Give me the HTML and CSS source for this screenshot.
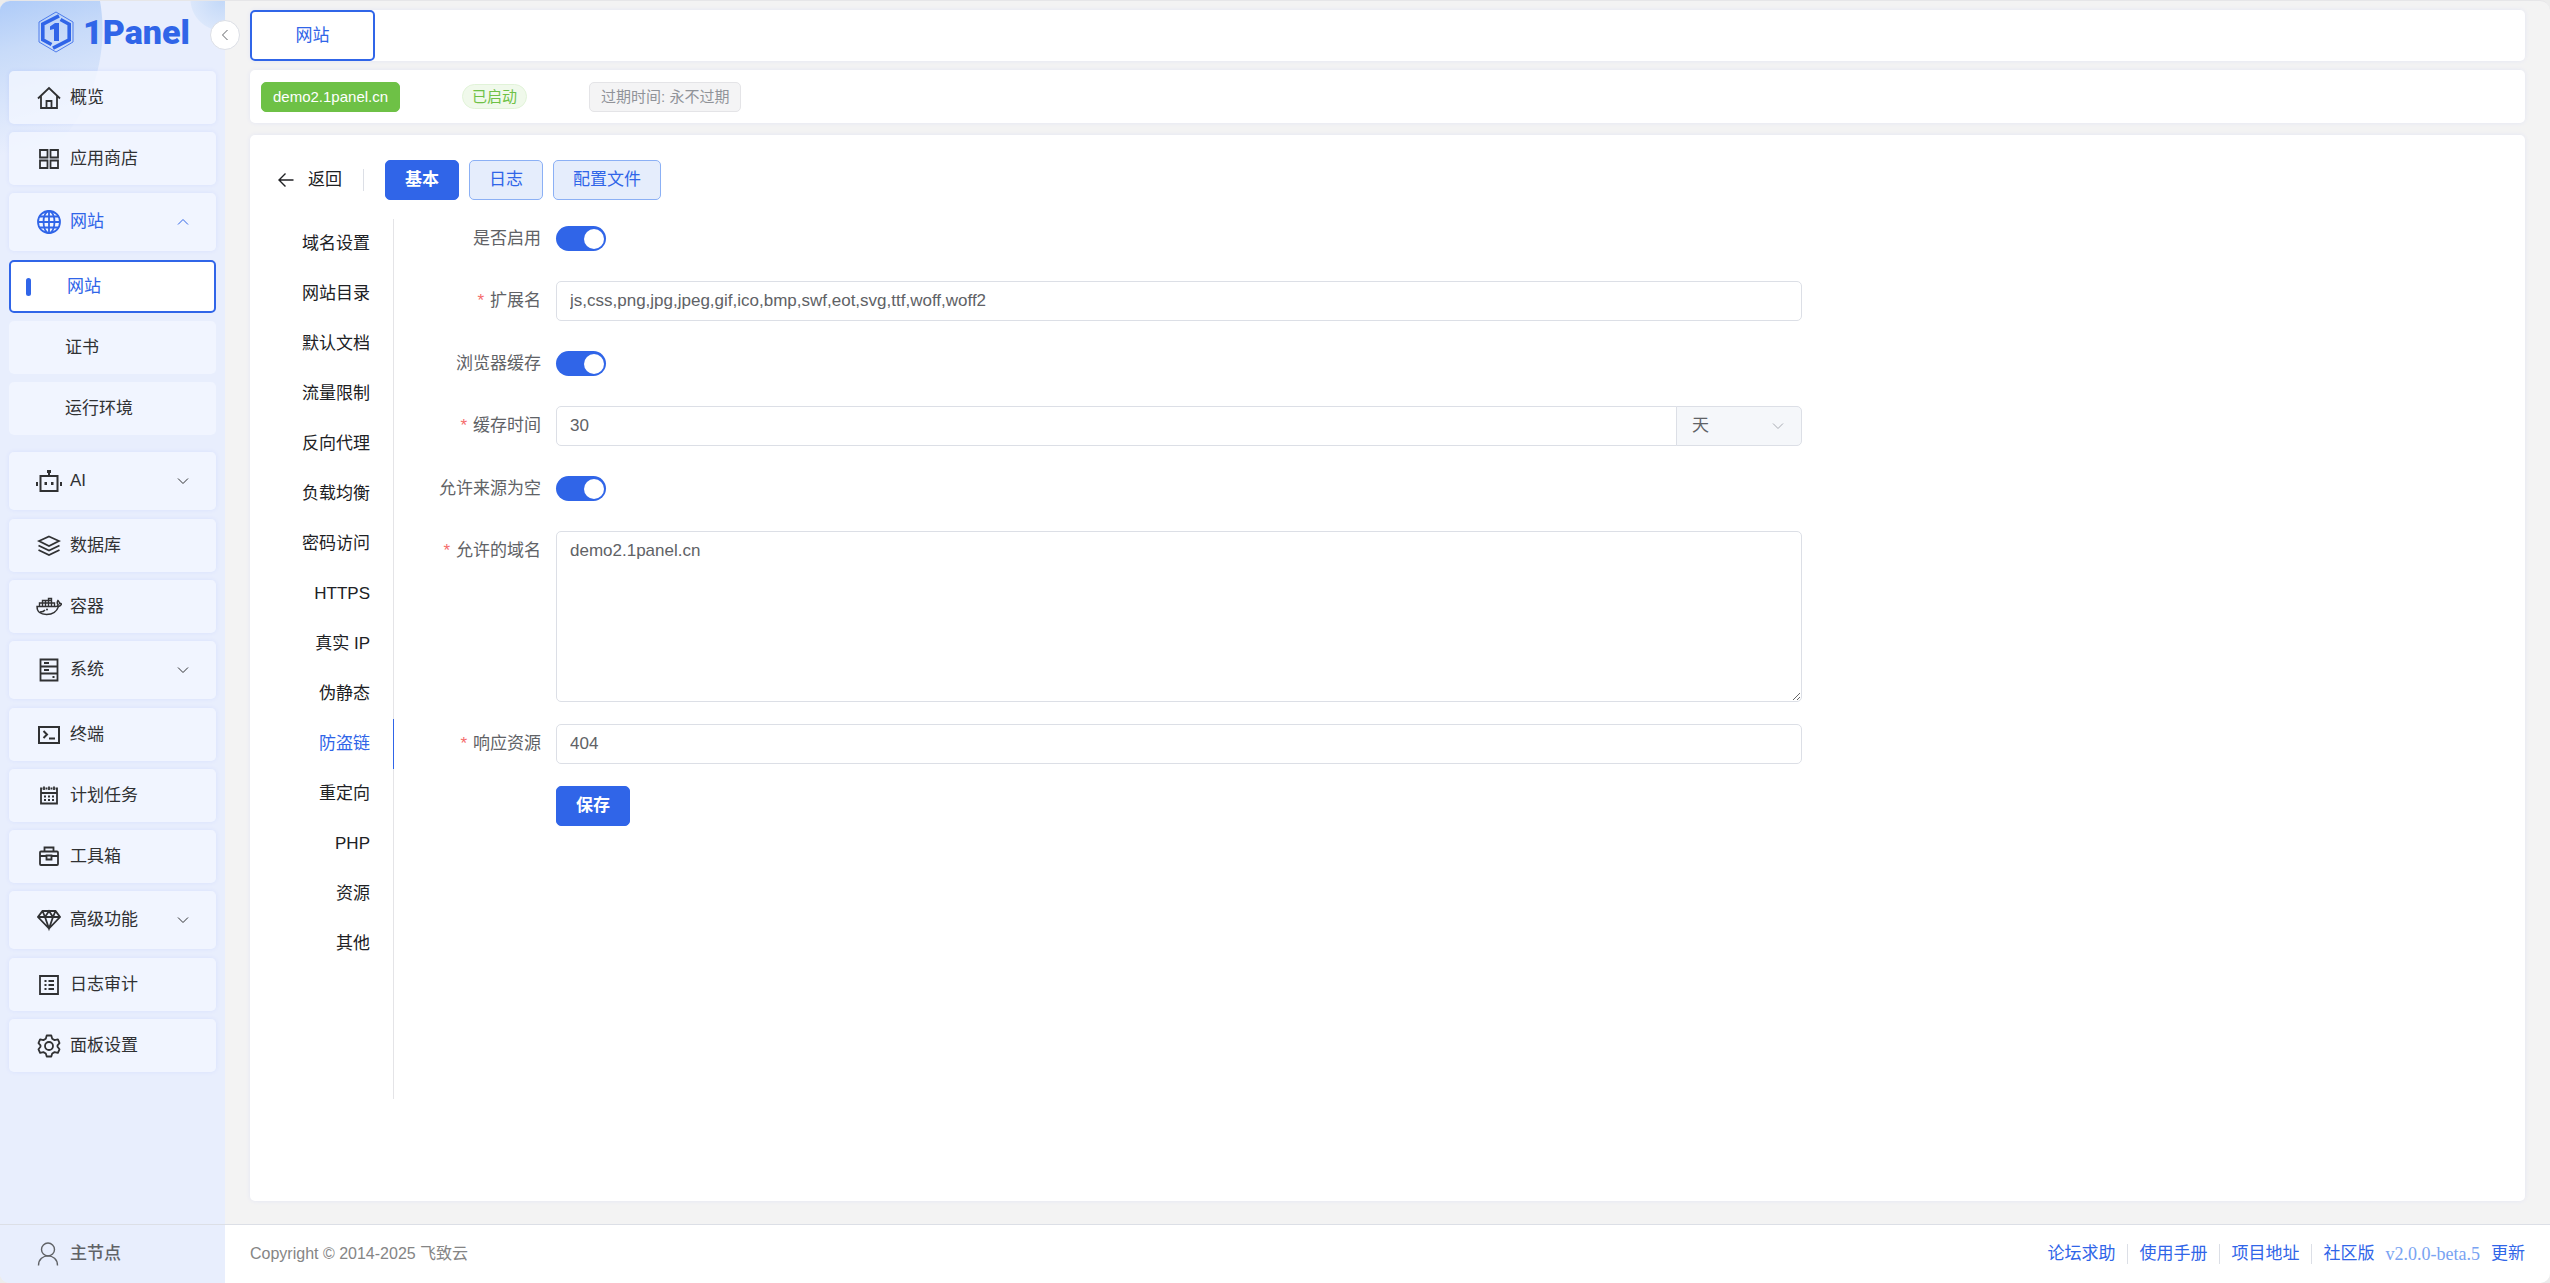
FILE: index.html
```html
<!DOCTYPE html>
<html lang="zh-CN">
<head>
<meta charset="UTF-8">
<meta name="viewport" content="width=device-width, initial-scale=1">
<title>1Panel</title>
<link rel="stylesheet" href="styles.css">
</head>
<body>
<svg class="sprite" aria-hidden="true">
  <symbol id="chevron" viewBox="0 0 12 12"><path d="M1 3.5l5 5 5-5"/></symbol>
</svg>
<div class="app">
  <aside class="sidebar">
    <a class="logo" href="#" aria-label="1Panel">
      <svg class="logo-mark" viewBox="0 0 36 42">
        <path d="M18 1L35 11V31L18 41L1 31V11Z" stroke="currentColor" stroke-width="0.8"/>
        <path d="M21 4.800L4.800 13.200V28.800L13.500 33.500" stroke="currentColor" stroke-width="3.6"/>
        <path d="M15 37.200L31.200 28.800V13.200L22.500 8.500" stroke="currentColor" stroke-width="3.6"/>
        <path d="M12 15.500L17 12H21V30H16V18L12 19Z" fill="currentColor"/>
      </svg>
      <span class="logo-text">1Panel</span>
    </a>
    <nav class="menu">
      <a class="item" href="#"><svg class="icon" viewBox="0 0 24 24"><path d="M1 12.500L12 2L23 12.500M4 10V22H20V10M9.500 22V15H14.500V22"/></svg>概览</a>
      <a class="item" href="#"><svg class="icon" viewBox="0 0 24 24"><path d="M3 3H10.500V10.500H3ZM13.500 3H21V10.500H13.500ZM3 13.500H10.500V21H3ZM13.500 13.500H21V21H13.500Z"/></svg>应用商店</a>
      <div class="group">
        <a class="item item-group current" href="#"><svg class="icon" viewBox="0 0 24 24"><circle cx="12" cy="12" r="11"/><ellipse cx="12" cy="12" rx="5.500" ry="11"/><path d="M12 1V23M1 12H23M2.500 6.500H21.500M2.500 17.500H21.500"/></svg>网站<svg class="chev up"><use href="#chevron"/></svg></a>
        <a class="item sub active" href="#">网站</a>
        <a class="item sub" href="#">证书</a>
        <a class="item sub" href="#">运行环境</a>
      </div>
      <a class="item item-group" href="#"><svg class="icon wide" viewBox="0 0 26 24"><path d="M4.500 7H21.500V22H4.500ZM13 7V3M1 13V17M25 13V17" stroke-width="2"/><path class="solid" d="M11 1H15V4H11ZM8.500 13H11V16H8.500ZM15 13H17.500V16H15Z"/></svg>AI<svg class="chev"><use href="#chevron"/></svg></a>
      <a class="item" href="#"><svg class="icon" viewBox="0 0 24 24"><path d="M12 2.500L22 7L12 12L2 7ZM1.500 11.500L12 16.500L22.500 11.500M1.500 16L12 21L22.500 16"/></svg>数据库</a>
      <a class="item" href="#"><svg class="icon wide" viewBox="0 0 26 24"><path d="M1 11.500H20C21.500 11.500 22 11 22 9.500C21 8.500 21 7 22 5.500C23 6.500 23.500 7.500 23.500 8.500C24.500 8 25 8.500 25.500 9C25 10.500 24 11 22.500 11.500C21 16 17.500 19.500 10.500 19.500C4.500 19.500 1 17 1 11.500ZM3.500 11V8H6.500V11M6.500 8V5.500H12.500V11M9.500 5.500V11M12.500 11V3.500H15.500V11M12.500 5.500H15.500M6.500 8H18.500V11M4 17C6.500 17 8 16.500 9 15" stroke-width="1.400"/><circle class="solid" cx="11" cy="14.500" r="1"/></svg>容器</a>
      <a class="item item-group" href="#"><svg class="icon" viewBox="0 0 24 24"><path d="M3.500 1.500H20.500V22.500H3.500ZM3.500 8.500H20.500M3.500 15.500H20.500M7 5H12M7 12H12M15.500 19H17.500"/></svg>系统<svg class="chev"><use href="#chevron"/></svg></a>
      <a class="item" href="#"><svg class="icon" viewBox="0 0 24 24"><path d="M2 4H22V20H2ZM6.500 8L10 11.500L6.500 15M12 15.500H18" stroke-width="2"/></svg>终端</a>
      <a class="item" href="#"><svg class="icon" viewBox="0 0 24 24"><path d="M5.500 4.500H4V19.500H20V4.500H18.500M8.500 4.500H10.500M13.500 4.500H15.500M7 2.500V6M12 2.500V6M17 2.500V6M4 9H20"/><path d="M7 12.500H9M11 12.500H13M15 12.500H17M7 16H9M11 16H13M15 16H17"/></svg>计划任务</a>
      <a class="item" href="#"><svg class="icon" viewBox="0 0 24 24"><path d="M7.500 6.500V2.500H16.500V6.500M5.500 6.500H4Q3 6.500 3 7.500V19Q3 20 4 20H20Q21 20 21 19V7.500Q21 6.500 20 6.500H5.500M3 11H9.500M14.500 11H21M9.500 10.500H14.500V14.500H9.500Z"/></svg>工具箱</a>
      <a class="item item-group" href="#"><svg class="icon" viewBox="0 0 24 24"><path d="M5.500 3H18.500L23 9L12 20.500L1 9ZM1 9H23M5.500 3L8 9L12 20.500L16 9L18.500 3M8 9L12 3L16 9"/></svg>高级功能<svg class="chev"><use href="#chevron"/></svg></a>
      <a class="item" href="#"><svg class="icon" viewBox="0 0 24 24"><path d="M3 3H21V21H3Z"/><path d="M7.500 8H9.500M11.500 8H17M7.500 12H9.500M11.500 12H17M7.500 16H9.500M11.500 16H17"/></svg>日志审计</a>
      <a class="item" href="#"><svg class="icon" viewBox="0 0 24 24"><path d="M9.700 1.500H14.300L15.200 4.700L17.600 6.100L20.900 5.300L22.500 9.200L20.500 11.400V12.800L22.500 15.300L20.900 18.900L17.600 18.100L15.200 19.500L14.300 22.500H9.700L8.800 19.500L6.400 18.100L3.100 18.900L1.500 15.300L3.500 12.800V11.400L1.500 9.200L3.100 5.300L6.400 6.100L8.800 4.700Z" stroke-linejoin="round"/><circle cx="12" cy="12" r="4"/></svg>面板设置</a>
    </nav>
    <button class="node" type="button"><svg class="node-icon" viewBox="0 0 24 24"><circle cx="12" cy="7.500" r="6.500"/><path d="M2.500 23.500C2.500 10.700 21.500 10.700 21.500 23.500"/></svg>主节点</button>
    <button class="collapse" type="button" aria-label="收起"><svg class="chev left"><use href="#chevron"/></svg></button>
  </aside>

  <div class="page">
    <main class="content">
      <div class="card tabbar"><button class="tab" type="button">网站</button></div>

      <div class="card status">
        <span class="tag tag-site">demo2.1panel.cn</span>
        <span class="tag tag-run">已启动</span>
        <span class="tag tag-expire">过期时间: 永不过期</span>
      </div>

      <section class="card detail">
        <header class="detail-head">
          <a class="back" href="#"><svg class="arrow" viewBox="0 0 16 16"><path d="M15.500 8H1M7.500 1.500L1 8L7.500 14.500"/></svg>返回</a>
          <button class="btn btn-primary" type="button">基本</button>
          <button class="btn btn-plain" type="button">日志</button>
          <button class="btn btn-plain" type="button">配置文件</button>
        </header>

        <div class="detail-body">
          <nav class="side-tabs">
            <a href="#">域名设置</a>
            <a href="#">网站目录</a>
            <a href="#">默认文档</a>
            <a href="#">流量限制</a>
            <a href="#">反向代理</a>
            <a href="#">负载均衡</a>
            <a href="#">密码访问</a>
            <a href="#">HTTPS</a>
            <a href="#">真实 IP</a>
            <a href="#">伪静态</a>
            <a href="#" class="selected">防盗链</a>
            <a href="#">重定向</a>
            <a href="#">PHP</a>
            <a href="#">资源</a>
            <a href="#">其他</a>
          </nav>

          <div class="form-area">
            <form class="form">
              <div class="row row-switch">
                <label for="enable">是否启用</label>
                <input class="switch" id="enable" type="checkbox" role="switch" checked>
              </div>
              <div class="row">
                <label class="required" for="extends">扩展名</label>
                <input class="field" id="extends" type="text" value="js,css,png,jpg,jpeg,gif,ico,bmp,swf,eot,svg,ttf,woff,woff2">
              </div>
              <div class="row row-switch">
                <label for="cache">浏览器缓存</label>
                <input class="switch" id="cache" type="checkbox" role="switch" checked>
              </div>
              <div class="row">
                <label class="required" for="cache-time">缓存时间</label>
                <div class="combo">
                  <input class="field" id="cache-time" type="text" value="30">
                  <div class="unit">
                    <select aria-label="时间单位"><option>天</option></select>
                    <svg class="chev"><use href="#chevron"/></svg>
                  </div>
                </div>
              </div>
              <div class="row row-switch">
                <label for="none-ref">允许来源为空</label>
                <input class="switch" id="none-ref" type="checkbox" role="switch" checked>
              </div>
              <div class="row">
                <label class="required" for="domains">允许的域名</label>
                <textarea class="field area" id="domains">demo2.1panel.cn</textarea>
              </div>
              <div class="row">
                <label class="required" for="response">响应资源</label>
                <input class="field" id="response" type="text" value="404">
              </div>
              <div class="row">
                <span></span>
                <button class="btn btn-primary save" type="button">保存</button>
              </div>
            </form>
          </div>
        </div>
      </section>
    </main>

    <footer class="footer">
      <span class="copyright">Copyright © 2014-2025 飞致云</span>
      <nav class="links">
        <a href="#">论坛求助</a>
        <a href="#">使用手册</a>
        <a href="#">项目地址</a>
        <a href="#">社区版</a>
        <span class="version">v2.0.0-beta.5</span>
        <a href="#" class="update">更新</a>
      </nav>
    </footer>
  </div>
</div>
</body>
</html>
```

FILE: styles.css
```css
:root {
  --primary: #3065e8;
  --text: #303133;
  --label: #606266;
  --line: #dcdfe6;
  --shadow: 0 0 5px rgba(0, 62, 255, 0.07);
}

* {
  box-sizing: border-box;
}

body {
  margin: 0;
  background: #ececec;
  color: var(--text);
  font: 17px/24px "Liberation Sans", "Noto Sans CJK SC", sans-serif;
}

button,
input,
select,
textarea {
  font: inherit;
  color: inherit;
  margin: 0;
}

button {
  cursor: pointer;
}

a {
  color: inherit;
  text-decoration: none;
}

svg {
  display: block;
  fill: none;
  stroke: currentColor;
}

.sprite {
  display: none;
}

.app {
  display: flex;
  min-height: 100vh;
  border-top: 1px solid #e6e6e8;
  border-radius: 10px;
  overflow: hidden;
  background: #f3f3f3;
}

/* Sidebar */
.sidebar {
  position: relative;
  flex: none;
  display: flex;
  flex-direction: column;
  width: 225px;
  background:
    radial-gradient(circle at 222px -2px, #c2d8f8 0, #dbe7fb 31px, transparent 32px),
    radial-gradient(circle at -66px 29px, transparent 0, transparent 168px, #e8eefd 169px),
    linear-gradient(165deg, #aecbf8 0, #c8dbf9 50px, #e8eefd 150px);
  background-color: #e8eefd;
}

.logo {
  display: flex;
  align-items: center;
  gap: 9px;
  height: 70px;
  padding: 0 0 8px 38px;
  color: var(--primary);
}

.logo-mark {
  width: 36px;
  height: 42px;
  stroke: none;
}

.logo-text {
  font: 900 34px/40px Roboto, sans-serif;
}

.menu {
  flex: 1;
  display: flex;
  flex-direction: column;
  gap: 8px;
  padding: 0 9px;
}

.group {
  display: flex;
  flex-direction: column;
  gap: 8px;
  margin-bottom: 9px;
}

.item {
  position: relative;
  display: flex;
  align-items: center;
  gap: 9px;
  height: 53px;
  padding: 0 27px 0 28px;
  border-radius: 5px;
  background: rgba(243, 246, 255, 0.8);
  box-shadow: var(--shadow);
}

.item-group {
  height: 58px;
  margin-bottom: 1px;
}

.current {
  color: var(--primary);
}

.sub {
  padding-left: 56px;
  box-shadow: none;
}

.active {
  border: 2px solid var(--primary);
  background: #fff;
  color: var(--primary);
}

.active::before {
  content: "";
  position: absolute;
  left: 15px;
  width: 5px;
  height: 18px;
  border-radius: 3px;
  background: var(--primary);
}

.icon {
  width: 24px;
  height: 24px;
  stroke-width: 1.8;
}

.wide {
  width: 26px;
  margin: 0 -1px;
}

.solid {
  fill: currentColor;
  stroke: none;
}

.chev {
  width: 12px;
  height: 12px;
  margin-left: auto;
  stroke-width: 1;
}

.up {
  transform: rotate(180deg);
}

.left {
  margin: auto;
  transform: rotate(90deg);
}

.node {
  display: flex;
  align-items: center;
  gap: 10px;
  height: 59px;
  padding: 0 0 0 36px;
  border: 0;
  border-top: 1px solid var(--line);
  background: none;
  color: var(--label);
  font-weight: 500;
}

.node-icon {
  width: 24px;
  height: 24px;
  stroke-width: 1.4;
}

.collapse {
  position: absolute;
  top: 19px;
  right: -15px;
  width: 30px;
  height: 30px;
  padding: 0;
  border: 1px solid var(--line);
  border-radius: 50%;
  background: #fff;
  color: var(--label);
}

/* Page */
.page {
  flex: 1;
  min-width: 0;
  display: flex;
  flex-direction: column;
}

.content {
  flex: 1;
  display: flex;
  flex-direction: column;
  padding: 9px 25px 23px;
}

.card {
  border-radius: 5px;
  background: #fff;
  box-shadow: var(--shadow);
}

.tabbar {
  margin-bottom: 9px;
}

.tab {
  display: block;
  width: 125px;
  height: 51px;
  border: 2px solid var(--primary);
  border-radius: 5px;
  background: #fff;
  color: var(--primary);
}

.status {
  display: flex;
  align-items: center;
  gap: 62px;
  height: 53px;
  margin-bottom: 12px;
  padding: 0 11px;
}

.tag {
  height: 30px;
  padding: 0 11px;
  border: 1px solid;
  border-radius: 5px;
  font-size: 15px;
  line-height: 28px;
}

.tag-site {
  border-color: #6ec146;
  background: #6ec146;
  color: #fff;
}

.tag-run {
  height: 25px;
  padding: 0 9px;
  border-color: #e1f3d8;
  border-radius: 13px;
  background: #f0f9eb;
  color: #6ec146;
  line-height: 23px;
}

.tag-expire {
  border-color: #e4e4e7;
  background: #f4f4f5;
  color: #909399;
}

.detail {
  flex: 1;
  padding: 25px 25px 101px;
}

.detail-head {
  display: flex;
  gap: 10px;
  margin-bottom: 18px;
}

.back {
  display: flex;
  align-items: center;
  gap: 14px;
  padding-left: 3px;
  margin-right: 11px;
  color: #202124;
}

.back::after {
  content: "";
  width: 1px;
  height: 22px;
  margin-left: 7px;
  background: var(--line);
}

.arrow {
  width: 16px;
  height: 16px;
  stroke-width: 1.4;
}

.btn {
  height: 40px;
  padding: 0 19px;
  border: 1px solid;
  border-radius: 5px;
}

.btn-primary {
  border-color: var(--primary);
  background: var(--primary);
  color: #fff;
  font-weight: 700;
}

.btn-plain {
  border-color: #8bb0f5;
  background: #e5edfc;
  color: var(--primary);
}

.detail-body {
  display: flex;
}

.side-tabs {
  flex: none;
  display: flex;
  flex-direction: column;
  width: 119px;
  min-height: 880px;
  margin-top: 1px;
  border-right: 1px solid #e4e4e7;
  color: #202124;
  text-align: right;
}

.side-tabs a {
  height: 50px;
  margin-right: -1px;
  padding-right: 23px;
  border-right: 1px solid transparent;
  line-height: 50px;
}

.side-tabs .selected {
  border-color: var(--primary);
  color: var(--primary);
}

.form-area {
  flex: 1;
  display: grid;
  grid-template-columns: 2fr 1fr;
  gap: 6px;
  padding-left: 24px;
}

.form {
  display: flex;
  flex-direction: column;
  gap: 22px;
  color: var(--label);
}

.row {
  display: grid;
  grid-template-columns: 123px 1fr;
  gap: 15px;
}

.row label {
  line-height: 40px;
  text-align: right;
}

.required::before {
  content: "*";
  margin-right: 6px;
  color: #f56c6c;
}

.row-switch {
  align-items: center;
  height: 41px;
}

.switch {
  appearance: none;
  display: flex;
  align-items: center;
  width: 50px;
  height: 25px;
  padding: 0 2px;
  border-radius: 13px;
  background: #dcdfe6;
  cursor: pointer;
}

.switch::before {
  content: "";
  width: 20px;
  height: 20px;
  border-radius: 50%;
  background: #fff;
}

.switch:checked {
  justify-content: flex-end;
  background: var(--primary);
}

.field {
  width: 100%;
  min-width: 0;
  height: 40px;
  padding: 0 13px;
  border: 1px solid var(--line);
  border-radius: 5px;
  background: #fff;
}

.area {
  display: block;
  height: 171px;
  padding: 7px 13px;
  resize: vertical;
}

.combo {
  display: flex;
}

.combo .field {
  flex: 1;
  border-radius: 5px 0 0 5px;
}

.unit {
  display: grid;
  align-items: center;
  width: 126px;
  margin-left: -1px;
  border: 1px solid var(--line);
  border-radius: 0 5px 5px 0;
  background: #f5f7fa;
}

.unit select {
  grid-area: 1 / 1;
  appearance: none;
  width: 100%;
  height: 38px;
  padding: 0 15px;
  border: 0;
  background: none;
}

.unit .chev {
  grid-area: 1 / 1;
  justify-self: end;
  margin-right: 17px;
  color: #a8abb2;
  pointer-events: none;
}

.save {
  justify-self: start;
}

/* Footer */
.footer {
  display: flex;
  align-items: center;
  justify-content: space-between;
  height: 59px;
  padding: 0 25px;
  border-top: 1px solid var(--line);
  background: #fff;
}

.copyright {
  color: #858585;
  font-size: 16px;
}

.links {
  display: flex;
  align-items: center;
  color: var(--primary);
}

.links a + a {
  margin-left: 11px;
  padding-left: 12px;
  border-left: 1px solid var(--line);
  line-height: 20px;
}

.version {
  margin: 0 11px;
  color: #79a3f2;
  font: 18px/24px "Liberation Serif", serif;
}
```
